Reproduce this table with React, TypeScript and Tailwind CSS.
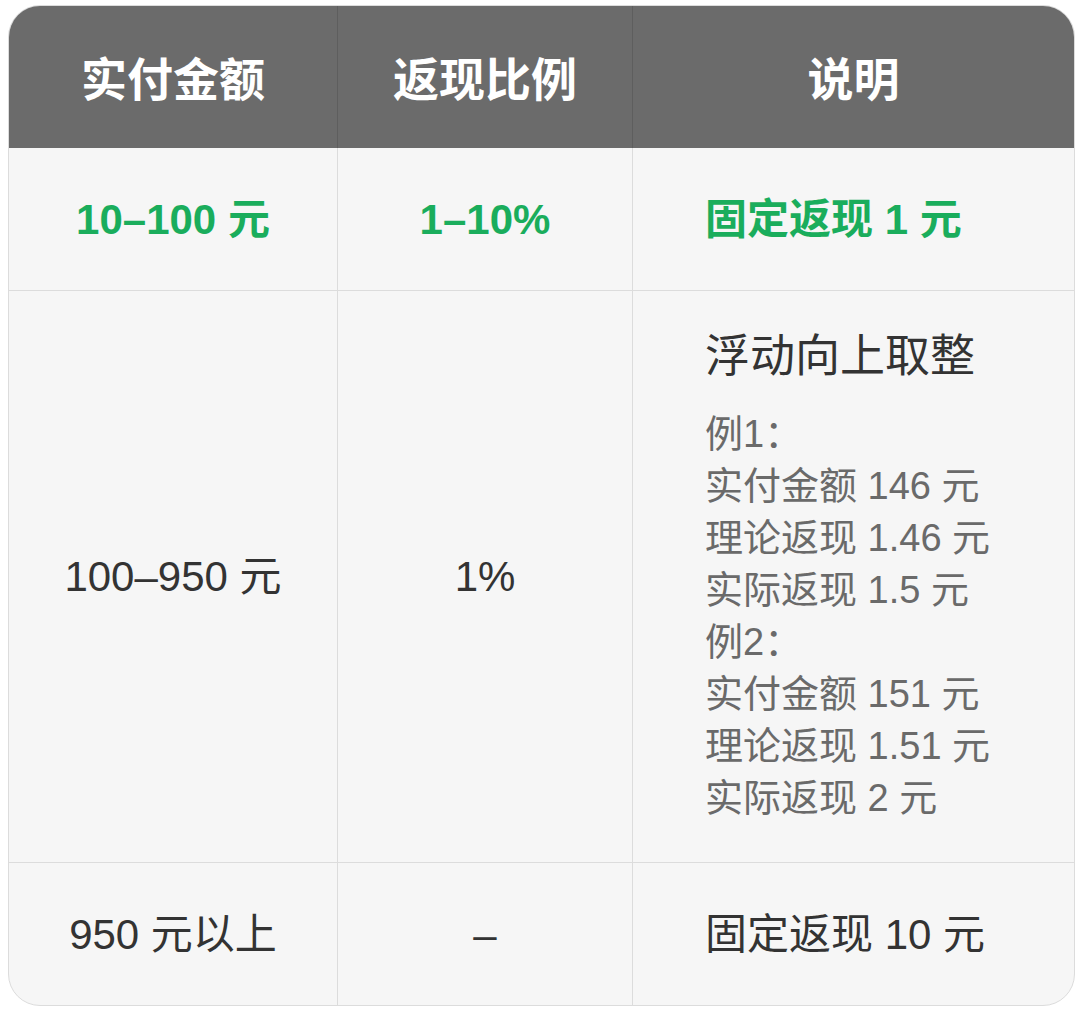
const font = { fontFamily: '"Liberation Sans", "Noto Sans CJK SC", "Noto Sans", sans-serif' }

const Cell: React.FC<{ children: React.ReactNode; className?: string }> = ({ children, className = '' }) => (
  <div className={`flex items-center border-[#dcdcdc] ${className}`}>{children}</div>
)

const examples = [
  '例1：',
  '实付金额 146 元',
  '理论返现 1.46 元',
  '实际返现 1.5 元',
  '例2：',
  '实付金额 151 元',
  '理论返现 1.51 元',
  '实际返现 2 元',
]

export default function App() {
  return (
    <div className="w-[1080px] h-[1016px] bg-white pt-[5px] pl-[8px]" style={font}>
      <div className="w-[1067px] rounded-[32px] overflow-hidden border border-[#dcdcdc] bg-[#f6f6f6]">
        <div className="grid grid-cols-[329px_295px_1fr] h-[142px] bg-[#6b6b6b] text-white font-bold text-[46px]">
          <div className="flex items-center justify-center pt-[6px] border-r border-[#5e5e5e]">实付金额</div>
          <div className="flex items-center justify-center pt-[6px] border-r border-[#5e5e5e]">返现比例</div>
          <div className="flex items-center justify-center pt-[6px]">说明</div>
        </div>

        <div className="grid grid-cols-[329px_295px_1fr] text-[#1aad5c] font-bold text-[42px] h-[143px]">
          <Cell className="justify-center border-r border-b">10–100 元</Cell>
          <Cell className="justify-center border-r border-b">1–10%</Cell>
          <Cell className="pl-[72px] border-b">固定返现 1 元</Cell>
        </div>

        <div className="grid grid-cols-[329px_295px_1fr] text-[#333] text-[42px] h-[572px]">
          <Cell className="justify-center border-r border-b">100–950 元</Cell>
          <Cell className="justify-center border-r border-b">1%</Cell>
          <Cell className="pl-[72px] border-b">
            <div className="flex flex-col">
              <p className="text-[45px] leading-[56px] text-[#333] mb-[23px]">浮动向上取整</p>
              {examples.map((line, i) => (
                <p key={i} className="text-[38px] leading-[52px] text-[#6a6a6a]">{line}</p>
              ))}
            </div>
          </Cell>
        </div>

        <div className="grid grid-cols-[329px_295px_1fr] text-[#333] text-[42px] h-[142px]">
          <Cell className="justify-center border-r">950 元以上</Cell>
          <Cell className="justify-center border-r">–</Cell>
          <Cell className="pl-[72px]">固定返现 10 元</Cell>
        </div>
      </div>
    </div>
  )
}
